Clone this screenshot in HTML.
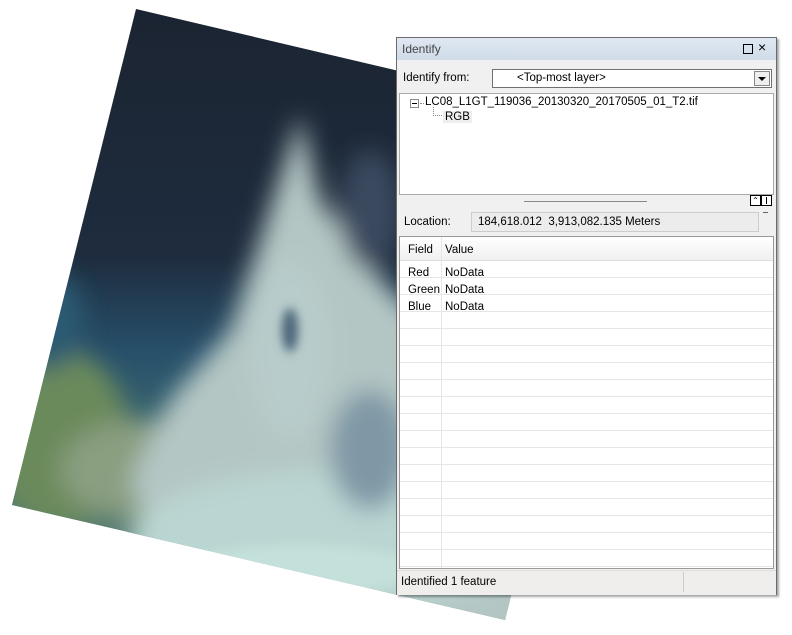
<!DOCTYPE html>
<html><head><meta charset="utf-8"><style>
body{margin:0;width:792px;height:635px;background:#fff;position:relative;overflow:hidden;font-family:"Liberation Sans",sans-serif;font-size:11px;color:#000}
.p{position:absolute}
</style></head><body>
<svg class="p" style="left:0;top:0" width="792" height="635">
<defs>
<clipPath id="c"><polygon points="136,9 628,125 505,620 12,505"/></clipPath>
<linearGradient id="g1" x1="0" y1="0" x2="0" y2="1">
<stop offset="0" stop-color="#1b2431"/><stop offset="0.4" stop-color="#1e2c3e"/><stop offset="0.55" stop-color="#27506a"/><stop offset="0.7" stop-color="#3f6c70"/><stop offset="1" stop-color="#6e8a70"/></linearGradient>
<filter id="b"><feGaussianBlur stdDeviation="12"/></filter>
<filter id="b2"><feGaussianBlur stdDeviation="5"/></filter>
</defs>
<g clip-path="url(#c)">
<rect x="0" y="0" width="640" height="640" fill="url(#g1)"/>
<g filter="url(#b)">
<ellipse cx="60" cy="440" rx="70" ry="90" fill="#6a8a5c"/>
<ellipse cx="140" cy="470" rx="80" ry="50" fill="#8a9e80"/>
<polygon points="300,115 320,200 380,280 430,330 560,420 560,640 200,640 130,480 170,400 230,330 260,240" fill="#b4c6c4"/>
<ellipse cx="330" cy="540" rx="200" ry="70" fill="#bad6d2"/>
<ellipse cx="290" cy="350" rx="40" ry="90" fill="#b8cccb"/>
<ellipse cx="370" cy="450" rx="40" ry="60" fill="#7f98a6"/>
<ellipse cx="370" cy="210" rx="30" ry="60" fill="#3a4a5e"/>
<ellipse cx="45" cy="320" rx="40" ry="50" fill="#2a5a72"/>
</g>
<g filter="url(#b2)">
<ellipse cx="290" cy="330" rx="8" ry="22" fill="#4a6478"/>
<ellipse cx="300" cy="570" rx="120" ry="25" fill="#c4e0da"/>
</g>
</g>
</svg>

<div class="p" style="left:396px;top:37px;width:379px;height:556px;border:1px solid #6a6a6a;background:#f0f0f0;box-shadow:2px 2px 2px rgba(0,0,0,.35)">
 <div class="p" style="left:0;top:0;width:379px;height:22px;background:linear-gradient(#dfe8f2,#cfdbe8)"></div>
 <div class="p" style="left:5px;top:4px;color:#444;font-size:12px">Identify</div>
 <div class="p" style="left:346px;top:6px;width:8px;height:8px;border:1px solid #000"></div>
 <div class="p" style="left:361px;top:1px;font-size:14px">×</div>
 <div class="p" style="left:6px;top:34px;font-size:11.5px">Identify from:</div>
 <div class="p" style="left:95px;top:31px;width:278px;height:17px;border:1px solid #707070;background:#fff">
  <div class="p" style="left:24px;top:2px;font-size:11.5px">&lt;Top-most layer&gt;</div>
  <div class="p" style="right:1px;top:1px;width:14px;height:13px;border:1px solid #888;background:#eee"><div class="p" style="left:3px;top:5px;border-left:4px solid transparent;border-right:4px solid transparent;border-top:4px solid #000"></div></div>
 </div>
 <div class="p" style="left:2px;top:55px;width:373px;height:100px;background:#fff;border:1px solid #aaa">
  <div class="p" style="left:10px;top:5px;width:7px;height:7px;border:1px solid #8a8a8a;font-size:0"><div class="p" style="left:1px;top:3px;width:5px;height:1px;background:#000"></div></div>
  <div class="p" style="left:20px;top:9px;width:4px;border-top:1px dotted #888"></div>
  <div class="p" style="left:25px;top:2px;font-size:11.5px">LC08_L1GT_119036_20130320_20170505_01_T2.tif</div>
  <div class="p" style="left:33px;top:13px;height:8px;width:8px;border-left:1px dotted #888;border-bottom:1px dotted #888"></div>
  <div class="p" style="left:43px;top:17px;padding:0 2px;background:#eee;font-size:11.5px">RGB</div>
 </div>
 <div class="p" style="left:127px;top:163px;width:123px;height:1px;background:#888"></div>
 <div class="p" style="left:353px;top:157px;width:9px;height:9px;border:1px solid #000;background:#fff;font-size:8px;line-height:9px;text-align:center">&#8963;</div>
 <div class="p" style="left:364px;top:157px;width:9px;height:9px;border:1px solid #000;background:#fff"><div class="p" style="left:4px;top:1px;width:1px;height:7px;background:#000"></div></div>
 <div class="p" style="left:7px;top:178px;font-size:11.5px">Location:</div>
 <div class="p" style="left:74px;top:174px;width:286px;height:18px;border:1px solid #ccc;background:#ececec"><div class="p" style="left:6px;top:3px;font-size:11.5px">184,618.012&nbsp; 3,913,082.135 Meters</div></div>
 <div class="p" style="left:366px;top:174px;width:5px;height:3px;border-top:1px solid #666;font-size:0"></div>
 <div class="p" style="left:2px;top:198px;width:373px;height:331px;background:#fff;border:1px solid #999;overflow:hidden">
  <div class="p" style="left:0;top:0;width:373px;height:23px;background:linear-gradient(#fff,#f0f0f0);border-bottom:1px solid #ddd"></div>
  <div class="p" style="left:8px;top:7px;font-size:11.5px">Field</div>
  <div class="p" style="left:45px;top:7px;font-size:11.5px">Value</div>
  <div class="p" style="left:41px;top:0;width:1px;height:331px;background:#e6e6e6"></div>
  <div class="p" style="left:0;top:24px;width:373px;height:307px;background:repeating-linear-gradient(#fff 0 16px,#e6e6e6 16px 17px)"></div>
  <div class="p" style="left:41px;top:24px;width:1px;height:307px;background:#e6e6e6"></div>
  <div class="p" style="left:8px;top:28px;line-height:17px;font-size:11.5px">Red<br>Green<br>Blue</div>
  <div class="p" style="left:45px;top:28px;line-height:17px;font-size:11.5px">NoData<br>NoData<br>NoData</div>
 </div>
 <div class="p" style="left:0;top:532px;width:379px;height:24px;background:#f0eeec;border-top:1px solid #ddd"></div>
 <div class="p" style="left:286px;top:534px;width:1px;height:20px;background:#ccc"></div>
 <div class="p" style="left:4px;top:538px;font-size:11.5px">Identified 1 feature</div>
</div>
</body></html>
